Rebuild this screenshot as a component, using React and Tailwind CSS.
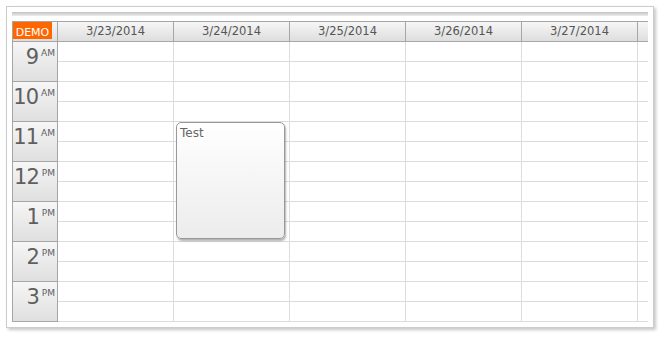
const days = ["3/23/2014", "3/24/2014", "3/25/2014", "3/26/2014", "3/27/2014"];
const hours = [
  ["9", "AM"],
  ["10", "AM"],
  ["11", "AM"],
  ["12", "PM"],
  ["1", "PM"],
  ["2", "PM"],
  ["3", "PM"],
];
const rows = Array.from({ length: 14 }, (_, i) => i);

export default function App() {
  return (
    <div className="w-[664px] h-[339px] bg-white pl-[6px] pt-[6px] font-['DejaVu_Sans',sans-serif]">
      <div className="w-[648px] h-[322px] border border-[#cccccc] bg-white p-[5px] shadow-[2px_2px_3px_rgba(0,0,0,0.22)]">
        <div className="h-[4px] bg-gradient-to-b from-[#c2c2c2] to-[#ececec]" />
        <div className="mt-[5px]">
          <div className="flex h-[21px] border-t border-b border-[#a6a6a6] bg-gradient-to-b from-[#f6f6f6] to-[#dedede]">
            <div className="w-[46px] shrink-0 border-l border-r border-[#a6a6a6]">
              <div className="w-[39px] h-[17px] bg-[#ff6600] text-white text-[11px] leading-none text-center pt-[5px] overflow-hidden">
                DEMO
              </div>
            </div>
            {days.map((d) => (
              <div
                key={d}
                className="w-[116px] shrink-0 border-r border-[#a6a6a6] flex items-center justify-center text-[11.5px] text-[#555555]"
              >
                {d}
              </div>
            ))}
            <div className="flex-1" />
          </div>
          <div className="flex">
            <div className="w-[46px] shrink-0 border-l border-r border-[#a6a6a6]">
              {hours.map(([h, ap]) => (
                <div
                  key={h}
                  className="h-[40px] border-b border-[#a6a6a6] bg-gradient-to-b from-[#f6f6f6] to-[#dfdfdf] flex justify-end items-start pr-[2px] pt-[5px] text-[#5f5f5f]"
                >
                  <span className="text-[21px] leading-none tracking-[-1px]">{h}</span>
                  <span className="text-[9px] leading-none ml-[3px] mt-[2px]">{ap}</span>
                </div>
              ))}
            </div>
            {days.map((d, i) => (
              <div key={d} className="relative w-[116px] shrink-0 border-r border-[#dcdcdc]">
                {rows.map((r) => (
                  <div key={r} className="h-[20px] border-b border-[#dcdcdc]" />
                ))}
                {i === 1 && (
                  <div className="absolute left-[2px] top-[80px] w-[109px] h-[117px] rounded-[5px] border border-[#999999] bg-gradient-to-b from-white to-[#ececec] shadow-[1px_2px_2px_rgba(0,0,0,0.3)] pl-[3px] pt-[4px] text-[12px] leading-none text-[#666666]">
                    Test
                  </div>
                )}
              </div>
            ))}
            <div className="flex-1">
              {rows.map((r) => (
                <div key={r} className="h-[20px] border-b border-[#dcdcdc]" />
              ))}
            </div>
          </div>
        </div>
      </div>
    </div>
  );
}
